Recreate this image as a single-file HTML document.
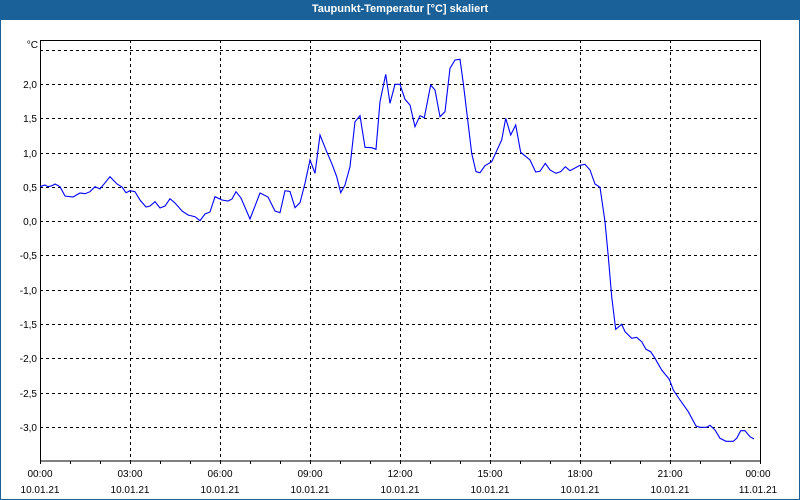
<!DOCTYPE html>
<html><head><meta charset="utf-8"><style>
html,body{margin:0;padding:0;background:#fff;}
body{width:800px;height:500px;position:relative;overflow:hidden;font-family:"Liberation Sans",sans-serif;}
.frame{position:absolute;left:0;top:0;width:798px;height:498px;border:1px solid #1b6199;}
.title{position:absolute;left:0;top:0;width:800px;height:20px;background:#1b6199;color:#fff;font-weight:bold;font-size:11px;text-align:center;line-height:19px;}
svg{position:absolute;left:0;top:0;}
svg text{font-family:"Liberation Sans",sans-serif;font-size:10px;fill:#000;}
</style></head><body>
<div class="frame"></div>
<div class="title">Taupunkt-Temperatur [°C] skaliert</div>
<svg width="800" height="500" viewBox="0 0 800 500">
<g stroke="#000" stroke-width="1" stroke-dasharray="3,3" shape-rendering="crispEdges">
<line x1="40" y1="50.5" x2="760" y2="50.5"/><line x1="40" y1="84.5" x2="760" y2="84.5"/>
<line x1="40" y1="118.5" x2="760" y2="118.5"/><line x1="40" y1="153.5" x2="760" y2="153.5"/>
<line x1="40" y1="187.5" x2="760" y2="187.5"/><line x1="40" y1="221.5" x2="760" y2="221.5"/>
<line x1="40" y1="255.5" x2="760" y2="255.5"/><line x1="40" y1="290.5" x2="760" y2="290.5"/>
<line x1="40" y1="324.5" x2="760" y2="324.5"/><line x1="40" y1="358.5" x2="760" y2="358.5"/>
<line x1="40" y1="393.5" x2="760" y2="393.5"/><line x1="40" y1="427.5" x2="760" y2="427.5"/>
<line x1="130.5" y1="40" x2="130.5" y2="461"/><line x1="220.5" y1="40" x2="220.5" y2="461"/>
<line x1="310.5" y1="40" x2="310.5" y2="461"/><line x1="400.5" y1="40" x2="400.5" y2="461"/>
<line x1="490.5" y1="40" x2="490.5" y2="461"/><line x1="580.5" y1="40" x2="580.5" y2="461"/>
<line x1="670.5" y1="40" x2="670.5" y2="461"/>
</g>
<rect x="40.5" y="40.5" width="720" height="420.5" fill="none" stroke="#000" shape-rendering="crispEdges"/>
<g stroke="#000" shape-rendering="crispEdges">
<path d="M40.5 461v3M70.5 461v3M100.5 461v3M130.5 461v3M160.5 461v3M190.5 461v3M220.5 461v3M250.5 461v3M280.5 461v3M310.5 461v3M340.5 461v3M370.5 461v3M400.5 461v3M430.5 461v3M460.5 461v3M490.5 461v3M520.5 461v3M550.5 461v3M580.5 461v3M610.5 461v3M640.5 461v3M670.5 461v3M700.5 461v3M730.5 461v3M760.5 461v3"/>
</g>
<polyline fill="none" stroke="#0000ff" stroke-width="1.1" points="40,186.7 45,185 48,186.7 52,185.7 55,184 60,186.7 65,196 73,197 80,193 85,193.7 90,191.7 95,186.7 100,189 110,176.7 117,184 122,187 126,192.7 130,190.7 135,191.7 140,200 146,207 150,206 155,201.7 160,208 165,206 170,198.7 175,203 182,211 188,215 195,216.7 200,220.7 205,214 210,212 215,196.7 222,200 228,201 232,199 236,191.7 241,198 250,219 260,193 268,197 275,211 280,212.7 285,190.7 290,191.5 295,207.7 300,202.7 305,183.3 310,160 315,173.3 320,135 326.7,151.7 331.7,163.3 336.7,176.7 340.7,192.7 345,185 350,166.7 355,121.7 360,115.7 365,147.3 371.7,147.7 376,149.3 380,101.7 385.7,74.3 390,103.3 395,84.3 400,84.3 405,99.3 410,105 415,126.7 420,115.7 424.3,117.7 430.7,85 435,90 440,116.7 445,111.7 450,68.3 455,60 460,59.3 463.3,83.3 471.7,153.3 476,171.7 480,172.7 485,165.7 491.7,161.7 498.3,147.3 501.7,140 505.7,118.3 510.7,135 515.7,125 520.7,152.3 530,160 535.7,172 540,171.3 545.3,163.3 550,170 556,173.3 560.7,171.7 565.3,166.7 570,170.7 580,165.3 585,164.3 590,170 595,184 600,187.3 605,221.7 608.3,256.7 611.7,296.7 615.7,329.3 621.7,324.3 625,331.7 631.7,338.3 636.7,337.3 641.7,341.7 646,349.3 650.7,351.7 655,358.3 661.7,370 669.3,379.3 673.3,390 680,400 688.3,411.7 696,426 700,427.3 706.7,427.3 710,425.3 715,430 720,438.3 726,441.3 733.3,441.3 736.7,438.3 740.7,430.7 745,430.7 750,436.7 754,439"/>
<g text-anchor="end">
<text x="38" y="48">°C</text>
<text x="37" y="88">2,0</text><text x="37" y="122">1,5</text><text x="37" y="157">1,0</text>
<text x="37" y="191">0,5</text><text x="37" y="225">0,0</text><text x="37" y="259">-0,5</text>
<text x="37" y="294">-1,0</text><text x="37" y="328">-1,5</text><text x="37" y="362">-2,0</text>
<text x="37" y="397">-2,5</text><text x="37" y="431">-3,0</text>
</g>
<g text-anchor="middle">
<text x="40" y="477">00:00</text><text x="40" y="493">10.01.21</text>
<text x="130" y="477">03:00</text><text x="130" y="493">10.01.21</text>
<text x="220" y="477">06:00</text><text x="220" y="493">10.01.21</text>
<text x="310" y="477">09:00</text><text x="310" y="493">10.01.21</text>
<text x="400" y="477">12:00</text><text x="400" y="493">10.01.21</text>
<text x="490" y="477">15:00</text><text x="490" y="493">10.01.21</text>
<text x="580" y="477">18:00</text><text x="580" y="493">10.01.21</text>
<text x="670" y="477">21:00</text><text x="670" y="493">10.01.21</text>
<text x="758" y="477">00:00</text><text x="758" y="493">11.01.21</text>
</g>
</svg>
</body></html>
